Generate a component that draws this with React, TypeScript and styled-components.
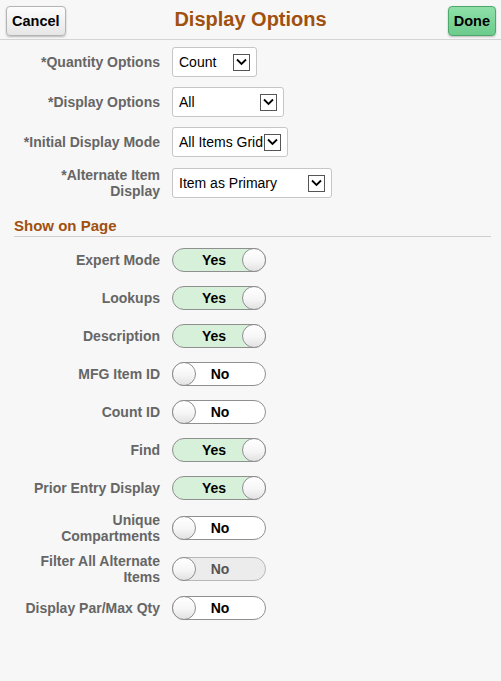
import React from "react";
import styled, { createGlobalStyle } from "styled-components";

const Global = createGlobalStyle`
  html, body { margin: 0; padding: 0; background: #f7f7f7; }
  body { font-family: "Liberation Sans", Arial, sans-serif; }
`;

const Page = styled.div`
  width: 501px;
  min-height: 681px;
  background: #f7f7f7;
`;

const Header = styled.div`
  height: 39px;
  border-bottom: 1px solid #d4d4d4;
  display: flex;
  align-items: center;
  justify-content: space-between;
  padding: 0 5px 0 6px;
  position: relative;
`;

const Title = styled.h1`
  position: absolute;
  left: 0;
  right: 0;
  margin: 0;
  text-align: center;
  font-size: 20px;
  font-weight: bold;
  color: #a0500f;
  pointer-events: none;
`;

const HeadButton = styled.button<{ $primary?: boolean }>`
  height: 30px;
  margin-top: 2px;
  padding: 0 5px;
  font-family: "Liberation Sans", Arial, sans-serif;
  font-size: 14.5px;
  font-weight: bold;
  color: #000;
  border-radius: 4px;
  border: 1px solid ${(p) => (p.$primary ? "#4fa86a" : "#b4b4b4")};
  background: ${(p) =>
    p.$primary
      ? "linear-gradient(#8ee0a8, #6ccb8c)"
      : "linear-gradient(#fdfdfd, #e6e6e6)"};
  box-shadow: 0 1px 2px rgba(0, 0, 0, 0.25);
`;

const Form = styled.div`
  padding: 7px 0 0 0;
`;

const FieldRow = styled.div`
  display: grid;
  grid-template-columns: 160px auto;
  column-gap: 12px;
  align-items: center;
  min-height: 30px;
  margin-bottom: 10px;
`;

const Label = styled.div`
  text-align: right;
  font-size: 14px;
  font-weight: bold;
  color: #666;
  line-height: 16px;
`;

const Select = styled.div<{ $w: number }>`
  width: ${(p) => p.$w}px;
  height: 30px;
  box-sizing: border-box;
  border: 1px solid #c6c6c6;
  border-radius: 3px;
  background: #fff;
  display: flex;
  align-items: center;
  justify-content: space-between;
  padding: 0 6px 0 6px;
  font-size: 14px;
  color: #000;
`;

const Arrow = styled.span`
  width: 17px;
  height: 17px;
  box-sizing: border-box;
  border: 1px solid #555;
  display: flex;
  align-items: center;
  justify-content: center;
  background: #fff;
`;

const Section = styled.div`
  margin: 18px 10px 0 14px;
  padding-bottom: 2px;
  border-bottom: 1px solid #cfcfcf;
  font-size: 15px;
  font-weight: bold;
  color: #a0500f;
`;

const Toggles = styled.div`
  padding-top: 4px;
`;

const ToggleRow = styled.div<{ $h: number }>`
  display: grid;
  grid-template-columns: 160px auto;
  column-gap: 12px;
  align-items: center;
  height: ${(p) => p.$h}px;
`;

const Switch = styled.div<{ $on: boolean; $disabled?: boolean }>`
  width: 94px;
  height: 24px;
  box-sizing: border-box;
  border: 1px solid ${(p) => (p.$disabled ? "#b8b8b8" : "#8f8f8f")};
  border-radius: 12px;
  background: ${(p) => (p.$on ? "#d6f0da" : p.$disabled ? "#ececec" : "#fff")};
  display: flex;
  flex-direction: ${(p) => (p.$on ? "row" : "row-reverse")};
  align-items: center;
  font-size: 14px;
  font-weight: bold;
  color: ${(p) => (p.$disabled ? "#555" : "#000")};
`;

const SwitchText = styled.span<{ $on: boolean }>`
  flex: 1;
  text-align: center;
  padding: ${(p) => (p.$on ? "0 0 0 12px" : "0 20px 0 0")};
`;

const Knob = styled.span`
  width: 24px;
  height: 24px;
  box-sizing: border-box;
  margin: -1px;
  border-radius: 50%;
  border: 1px solid #8f8f8f;
  background: linear-gradient(#fff 0%, #f6f6f6 55%, #e2e2e2 100%);
`;

const Chevron = () => (
  <svg width="11" height="8" viewBox="0 0 11 8">
    <path d="M1 1.5 L5.5 6 L10 1.5" fill="none" stroke="#000" strokeWidth="1.8" />
  </svg>
);

const selects = [
  { label: ["*Quantity Options"], value: "Count", w: 85 },
  { label: ["*Display Options"], value: "All", w: 112 },
  { label: ["*Initial Display Mode"], value: "All Items Grid", w: 116 },
  { label: ["*Alternate Item", "Display"], value: "Item as Primary", w: 160 },
];

const toggles = [
  { label: ["Expert Mode"], on: true, h: 38 },
  { label: ["Lookups"], on: true, h: 38 },
  { label: ["Description"], on: true, h: 38 },
  { label: ["MFG Item ID"], on: false, h: 38 },
  { label: ["Count ID"], on: false, h: 38 },
  { label: ["Find"], on: true, h: 38 },
  { label: ["Prior Entry Display"], on: true, h: 38 },
  { label: ["Unique", "Compartments"], on: false, h: 42 },
  { label: ["Filter All Alternate", "Items"], on: false, h: 40, disabled: true },
  { label: ["Display Par/Max Qty"], on: false, h: 38 },
];

const Lines = ({ lines }: { lines: string[] }) => (
  <>
    {lines.map((l, i) => (
      <React.Fragment key={l}>
        {i > 0 && <br />}
        {l}
      </React.Fragment>
    ))}
  </>
);

export default function App() {
  return (
    <Page>
      <Global />
      <Header>
        <HeadButton>Cancel</HeadButton>
        <Title>Display Options</Title>
        <HeadButton $primary>Done</HeadButton>
      </Header>
      <Form>
        {selects.map((s) => (
          <FieldRow key={s.value}>
            <Label>
              <Lines lines={s.label} />
            </Label>
            <Select $w={s.w}>
              <span>{s.value}</span>
              <Arrow>
                <Chevron />
              </Arrow>
            </Select>
          </FieldRow>
        ))}
        <Section>Show on Page</Section>
        <Toggles>
          {toggles.map((t) => (
            <ToggleRow key={t.label.join(" ")} $h={t.h}>
              <Label>
                <Lines lines={t.label} />
              </Label>
              <Switch $on={t.on} $disabled={t.disabled}>
                <SwitchText $on={t.on}>{t.on ? "Yes" : "No"}</SwitchText>
                <Knob />
              </Switch>
            </ToggleRow>
          ))}
        </Toggles>
      </Form>
    </Page>
  );
}
